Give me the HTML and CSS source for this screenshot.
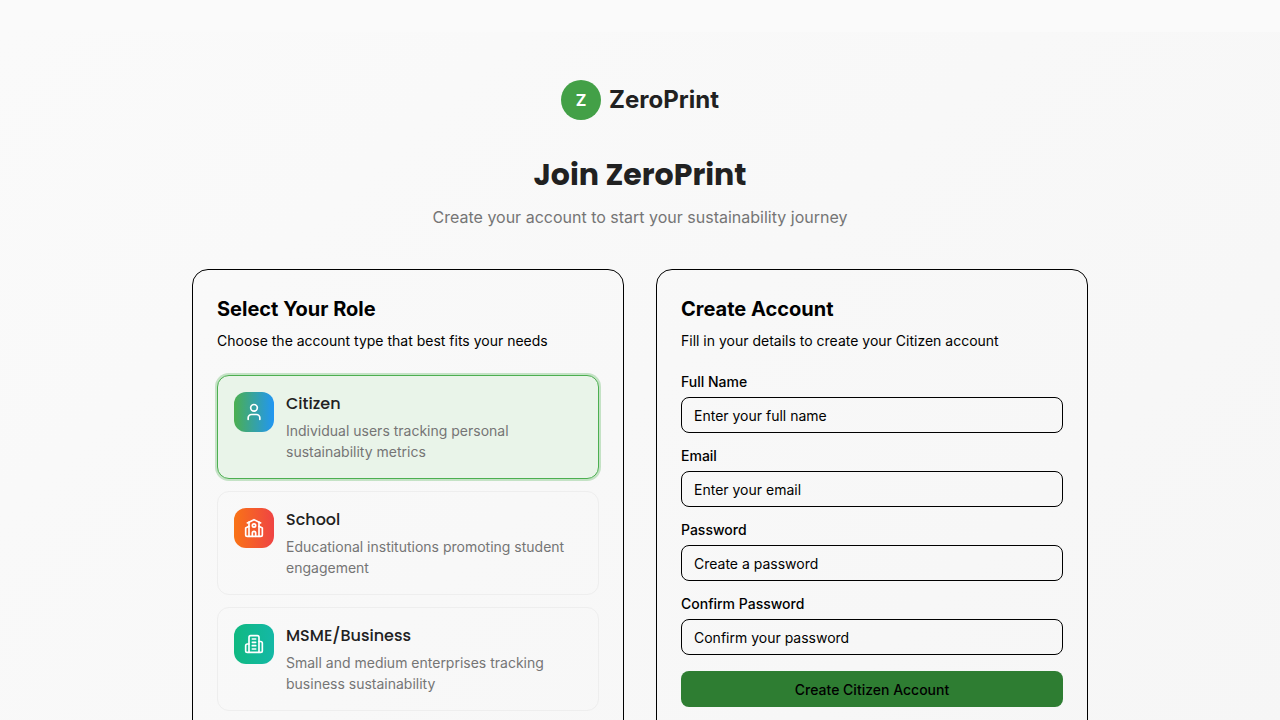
FILE: index.html
```html
<!DOCTYPE html>
<html lang="en">
<head>
<meta charset="utf-8">
<title>Join ZeroPrint</title>
<link rel="stylesheet" href="styles.css">
</head>
<body>
<main class="page">
  <header class="header">
    <div class="brand"><span class="brand-mark">Z</span><span class="brand-name">ZeroPrint</span></div>
    <h1 class="title">Join ZeroPrint</h1>
    <p class="subtitle">Create your account to start your sustainability journey</p>
  </header>
  <div class="columns">
    <section class="card">
      <h2 class="card-title">Select Your Role</h2>
      <p class="card-text">Choose the account type that best fits your needs</p>
      <div class="roles">
        <div class="role role-selected">
          <span class="role-icon citizen"><svg viewBox="0 0 24 24"><path d="M19 21v-2a4 4 0 0 0-4-4H9a4 4 0 0 0-4 4v2"/><circle cx="12" cy="7" r="4"/></svg></span>
          <div class="role-body"><h3 class="role-name">Citizen</h3><p class="role-text">Individual users tracking personal sustainability metrics</p></div>
        </div>
        <div class="role">
          <span class="role-icon school"><svg viewBox="0 0 24 24"><path d="M14 22v-4a2 2 0 1 0-4 0v4"/><path d="m18 10 4 2v8a2 2 0 0 1-2 2H4a2 2 0 0 1-2-2v-8l4-2"/><path d="M18 5v17"/><path d="m4 6 8-4 8 4"/><path d="M6 5v17"/><circle cx="12" cy="9" r="2"/></svg></span>
          <div class="role-body"><h3 class="role-name">School</h3><p class="role-text">Educational institutions promoting student engagement</p></div>
        </div>
        <div class="role">
          <span class="role-icon business"><svg viewBox="0 0 24 24"><path d="M6 22V4a2 2 0 0 1 2-2h8a2 2 0 0 1 2 2v18Z"/><path d="M6 12H4a2 2 0 0 0-2 2v6a2 2 0 0 0 2 2h2"/><path d="M18 9h2a2 2 0 0 1 2 2v9a2 2 0 0 1-2 2h-2"/><path d="M10 6h4"/><path d="M10 10h4"/><path d="M10 14h4"/><path d="M10 18h4"/></svg></span>
          <div class="role-body"><h3 class="role-name">MSME/Business</h3><p class="role-text">Small and medium enterprises tracking business sustainability</p></div>
        </div>
      </div>
    </section>
    <section class="card">
      <h2 class="card-title">Create Account</h2>
      <p class="card-text">Fill in your details to create your Citizen account</p>
      <form class="form">
        <div class="field"><label class="label" for="name">Full Name</label><input class="input" id="name" type="text" placeholder="Enter your full name"></div>
        <div class="field"><label class="label" for="email">Email</label><input class="input" id="email" type="email" placeholder="Enter your email"></div>
        <div class="field"><label class="label" for="password">Password</label><input class="input" id="password" type="password" placeholder="Create a password"></div>
        <div class="field"><label class="label" for="confirm">Confirm Password</label><input class="input" id="confirm" type="password" placeholder="Confirm your password"></div>
        <button class="submit" type="button">Create Citizen Account</button>
      </form>
    </section>
  </div>
</main>
</body>
</html>
```
FILE: styles.css
```css
* { box-sizing: border-box; margin: 0; padding: 0; }
html { overflow: hidden; background: #fafafa; }
body { padding-top: 32px; font-family: Inter, "Liberation Sans", sans-serif; color: #000; background: #fafafa; }
.page { min-height: 1200px; padding: 48px 192px; background: linear-gradient(to bottom right, #fafafa, #f5f5f5); }
.header { display: flex; flex-direction: column; align-items: center; text-align: center; }
.brand { display: flex; align-items: center; gap: 8px; height: 40px; }
.brand-mark { display: flex; align-items: center; justify-content: center; width: 40px; height: 40px; border-radius: 50%; background: #43a047; color: #fff; font-size: 16px; font-weight: 700; }
.brand-name { font-size: 24px; line-height: 32px; font-weight: 700; color: #212121; }
.title { margin-top: 37px; font-family: Poppins, Inter, sans-serif; font-size: 30px; line-height: 36px; font-weight: 700; color: #212121; }
.subtitle { margin-top: 12px; font-size: 16px; line-height: 24px; color: #757575; }
.columns { display: grid; grid-template-columns: 1fr 1fr; gap: 32px; margin-top: 40px; }
.card { min-height: 600px; padding: 24px; border: 1px solid #000; border-radius: 16px; }
.card-title { font-size: 20px; line-height: 30px; font-weight: 700; }
.card-text { margin-top: 6px; font-size: 14px; line-height: 21px; }
.roles { display: flex; flex-direction: column; gap: 12px; margin-top: 24px; }
.role { display: flex; gap: 12px; height: 104px; padding: 16px; border: 1px solid #eeeeee; border-radius: 12px; }
.role-selected { background: #e9f4e9; border-color: #4caf50; box-shadow: 0 0 0 2px rgba(76, 175, 80, 0.3); }
.role-icon { display: flex; align-items: center; justify-content: center; flex: none; width: 40px; height: 40px; border-radius: 12px; }
.role-icon svg { width: 20px; height: 20px; fill: none; stroke: #fff; stroke-width: 2; stroke-linecap: round; stroke-linejoin: round; }
.citizen { background: linear-gradient(to right, #4caf50, #2196f3); }
.school { background: linear-gradient(to right, #f97316, #ef4444); }
.business { background: linear-gradient(to right, #10b981, #14b8a6); }
.role-body { flex: 1; }
.role-name { font-family: Poppins, Inter, sans-serif; font-size: 16px; line-height: 24px; font-weight: 500; color: #212121; }
.role-text { margin-top: 4px; font-size: 14px; line-height: 21px; color: #757575; }
.form { display: flex; flex-direction: column; gap: 16px; margin-top: 24px; }
.field { display: flex; flex-direction: column; gap: 8px; }
.label { font-size: 14px; line-height: 14px; font-weight: 500; }
.input { width: 100%; height: 36px; padding: 4px 12px; border: 1px solid #000; border-radius: 8px; background: transparent; font: 400 14px/20px Inter, sans-serif; color: #000; }
.input::placeholder { color: #000; opacity: 1; }
.submit { height: 36px; padding: 1px 0 0; border: 0; border-radius: 8px; background: #2e7d32; color: #000; font: 500 14px/21px Inter, sans-serif; }
```
